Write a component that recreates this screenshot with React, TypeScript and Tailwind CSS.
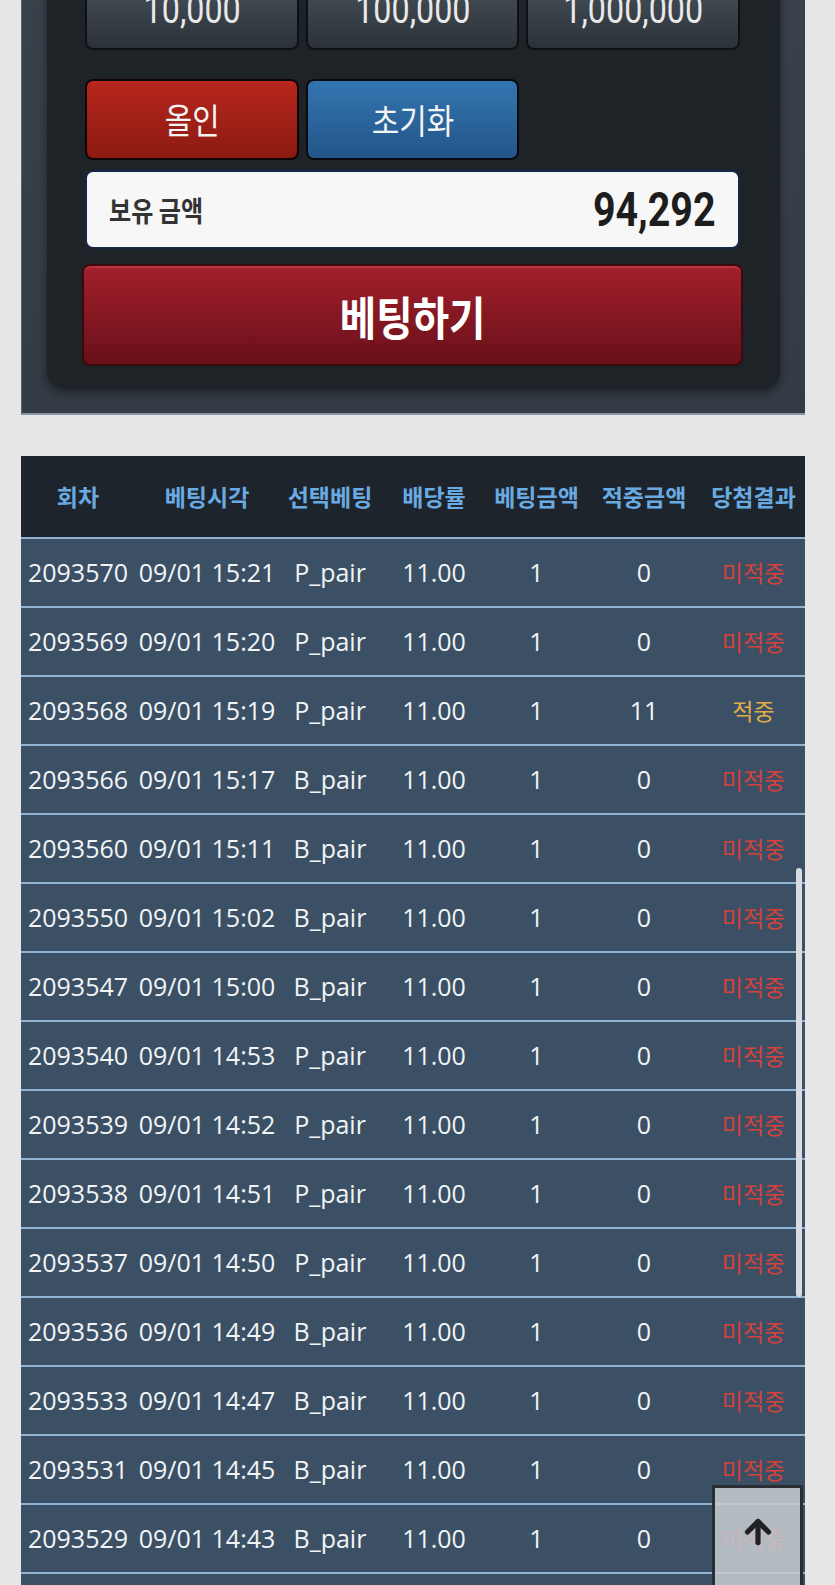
import { ArrowUp } from "lucide-react";

type Row = { round: string; time: string; pick: string; win: string; hit: boolean };

const rows: Row[] = [
  { round: "2093570", time: "09/01 15:21", pick: "P_pair", win: "0", hit: false },
  { round: "2093569", time: "09/01 15:20", pick: "P_pair", win: "0", hit: false },
  { round: "2093568", time: "09/01 15:19", pick: "P_pair", win: "11", hit: true },
  { round: "2093566", time: "09/01 15:17", pick: "B_pair", win: "0", hit: false },
  { round: "2093560", time: "09/01 15:11", pick: "B_pair", win: "0", hit: false },
  { round: "2093550", time: "09/01 15:02", pick: "B_pair", win: "0", hit: false },
  { round: "2093547", time: "09/01 15:00", pick: "B_pair", win: "0", hit: false },
  { round: "2093540", time: "09/01 14:53", pick: "P_pair", win: "0", hit: false },
  { round: "2093539", time: "09/01 14:52", pick: "P_pair", win: "0", hit: false },
  { round: "2093538", time: "09/01 14:51", pick: "P_pair", win: "0", hit: false },
  { round: "2093537", time: "09/01 14:50", pick: "P_pair", win: "0", hit: false },
  { round: "2093536", time: "09/01 14:49", pick: "B_pair", win: "0", hit: false },
  { round: "2093533", time: "09/01 14:47", pick: "B_pair", win: "0", hit: false },
  { round: "2093531", time: "09/01 14:45", pick: "B_pair", win: "0", hit: false },
  { round: "2093529", time: "09/01 14:43", pick: "B_pair", win: "0", hit: false },
  { round: "2093527", time: "09/01 14:41", pick: "B_pair", win: "0", hit: false },
];

const headers = ["회차", "베팅시각", "선택베팅", "배당률", "베팅금액", "적중금액", "당첨결과"];

const cols = "grid grid-cols-[114px_144px_102px_106px_99px_116px_103px]";

const chips = ["10,000", "100,000", "1,000,000"];

export default function App() {
  return (
    <div className="relative min-h-[1585px] overflow-hidden bg-[#e6e6e6] font-['Roboto','Noto_Sans_CJK_KR',sans-serif]">
      {/* betting panel */}
      <div className="-mt-[80px] ml-[21px] w-[784px] border-b-2 border-l border-b-[#8794a1] border-l-[#5b6670] bg-gradient-to-b from-[#3a434c] to-[#333b44] px-[25px] pt-[20px] pb-[25px]">
        <div className="rounded-2xl bg-[#1e2328] pt-[29px] pr-[40px] pb-[22px] pl-[38px] shadow-[0_4px_10px_rgba(0,0,0,0.45)]">
          <div className="grid grid-cols-3 gap-[7px]">
            {chips.map((c) => (
              <button
                key={c}
                className="flex h-[81px] items-center justify-center rounded-lg border-2 border-[#0e1013] bg-gradient-to-b from-[#4b545d] to-[#2c3239] pt-[2px] text-[#e9e9e9]"
              >
                <span className="inline-block scale-x-[0.85] text-[38px]">{c}</span>
              </button>
            ))}
          </div>

          <div className="mt-[29px] grid grid-cols-3 gap-[7px]">
            <button className="flex h-[81px] items-center justify-center rounded-lg border-2 border-[#0e0606] bg-gradient-to-b from-[#b7261c] to-[#8b1a12] text-[#f4f4f4]">
              <span className="inline-block scale-x-[0.85] text-[35px] font-['Noto_Sans_CJK_KR',sans-serif]">올인</span>
            </button>
            <button className="flex h-[81px] items-center justify-center rounded-lg border-2 border-[#070b10] bg-gradient-to-b from-[#3475b0] to-[#22568a] text-[#f4f4f4]">
              <span className="inline-block scale-x-[0.88] text-[34px] font-['Noto_Sans_CJK_KR',sans-serif]">초기화</span>
            </button>
          </div>

          <div className="mt-[10px] flex h-[79px] items-center justify-between rounded-lg border-2 border-[#17274a] bg-[#f7f7f8] pr-[22px] pl-[22px]">
            <span className="inline-block origin-left scale-x-[0.86] text-[28px] font-bold text-[#333] font-['Noto_Sans_CJK_KR',sans-serif]">
              보유 금액
            </span>
            <span className="inline-block origin-right scale-x-[0.82] text-[48px] font-bold text-[#1d1d1d]">94,292</span>
          </div>

          <button className="mt-[15px] -mx-[3px] flex h-[102px] w-[calc(100%+6px)] items-center justify-center rounded-lg border-2 border-[#3a0a0e] bg-gradient-to-b from-[#a3202c] to-[#691019] shadow-[inset_0_2px_0_rgba(255,120,120,0.25)]">
            <span className="inline-block scale-x-[0.86] text-[46px] font-bold text-white font-['Noto_Sans_CJK_KR',sans-serif]">
              베팅하기
            </span>
          </button>
        </div>
      </div>

      {/* history table */}
      <div className="mt-[41px] ml-[21px] w-[784px] font-['Open_Sans','Noto_Sans_CJK_KR',sans-serif]">
        <div className={`${cols} h-[81px] items-center bg-[#1d242b]`}>
          {headers.map((h) => (
            <div
              key={h}
              className="text-center text-[23px] font-bold whitespace-nowrap text-[#6aaae2] font-['Noto_Sans_CJK_KR',sans-serif]"
            >
              {h}
            </div>
          ))}
        </div>
        {rows.map((r) => (
          <div
            key={r.round}
            className={`${cols} h-[69px] items-center border-t-2 border-[#8fb3d2] bg-[#3b5065] text-[25px] text-[#f2f4f6]`}
          >
            <div className="text-center">{r.round}</div>
            <div className="text-center whitespace-nowrap">{r.time}</div>
            <div className="text-center">{r.pick}</div>
            <div className="text-center">11.00</div>
            <div className="text-center">1</div>
            <div className="text-center">{r.win}</div>
            <div
              className={`text-center text-[23px] font-['Noto_Sans_CJK_KR',sans-serif] ${
                r.hit ? "text-[#e3ad48]" : "text-[#d8403b]"
              }`}
            >
              {r.hit ? "적중" : "미적중"}
            </div>
          </div>
        ))}
      </div>

      {/* scrollbar thumb */}
      <div className="absolute top-[868px] left-[796px] h-[429px] w-[6px] rounded-full bg-[#d9dde1]" />

      {/* scroll to top */}
      <button className="absolute top-[1485px] left-[712px] flex h-[110px] w-[91px] justify-center border-[3px] border-[#2a2d31] bg-[rgba(200,205,210,0.85)] pt-[26px]">
        <ArrowUp className="h-[36px] w-[36px] text-[#222]" strokeWidth={3.5} />
      </button>
    </div>
  );
}
